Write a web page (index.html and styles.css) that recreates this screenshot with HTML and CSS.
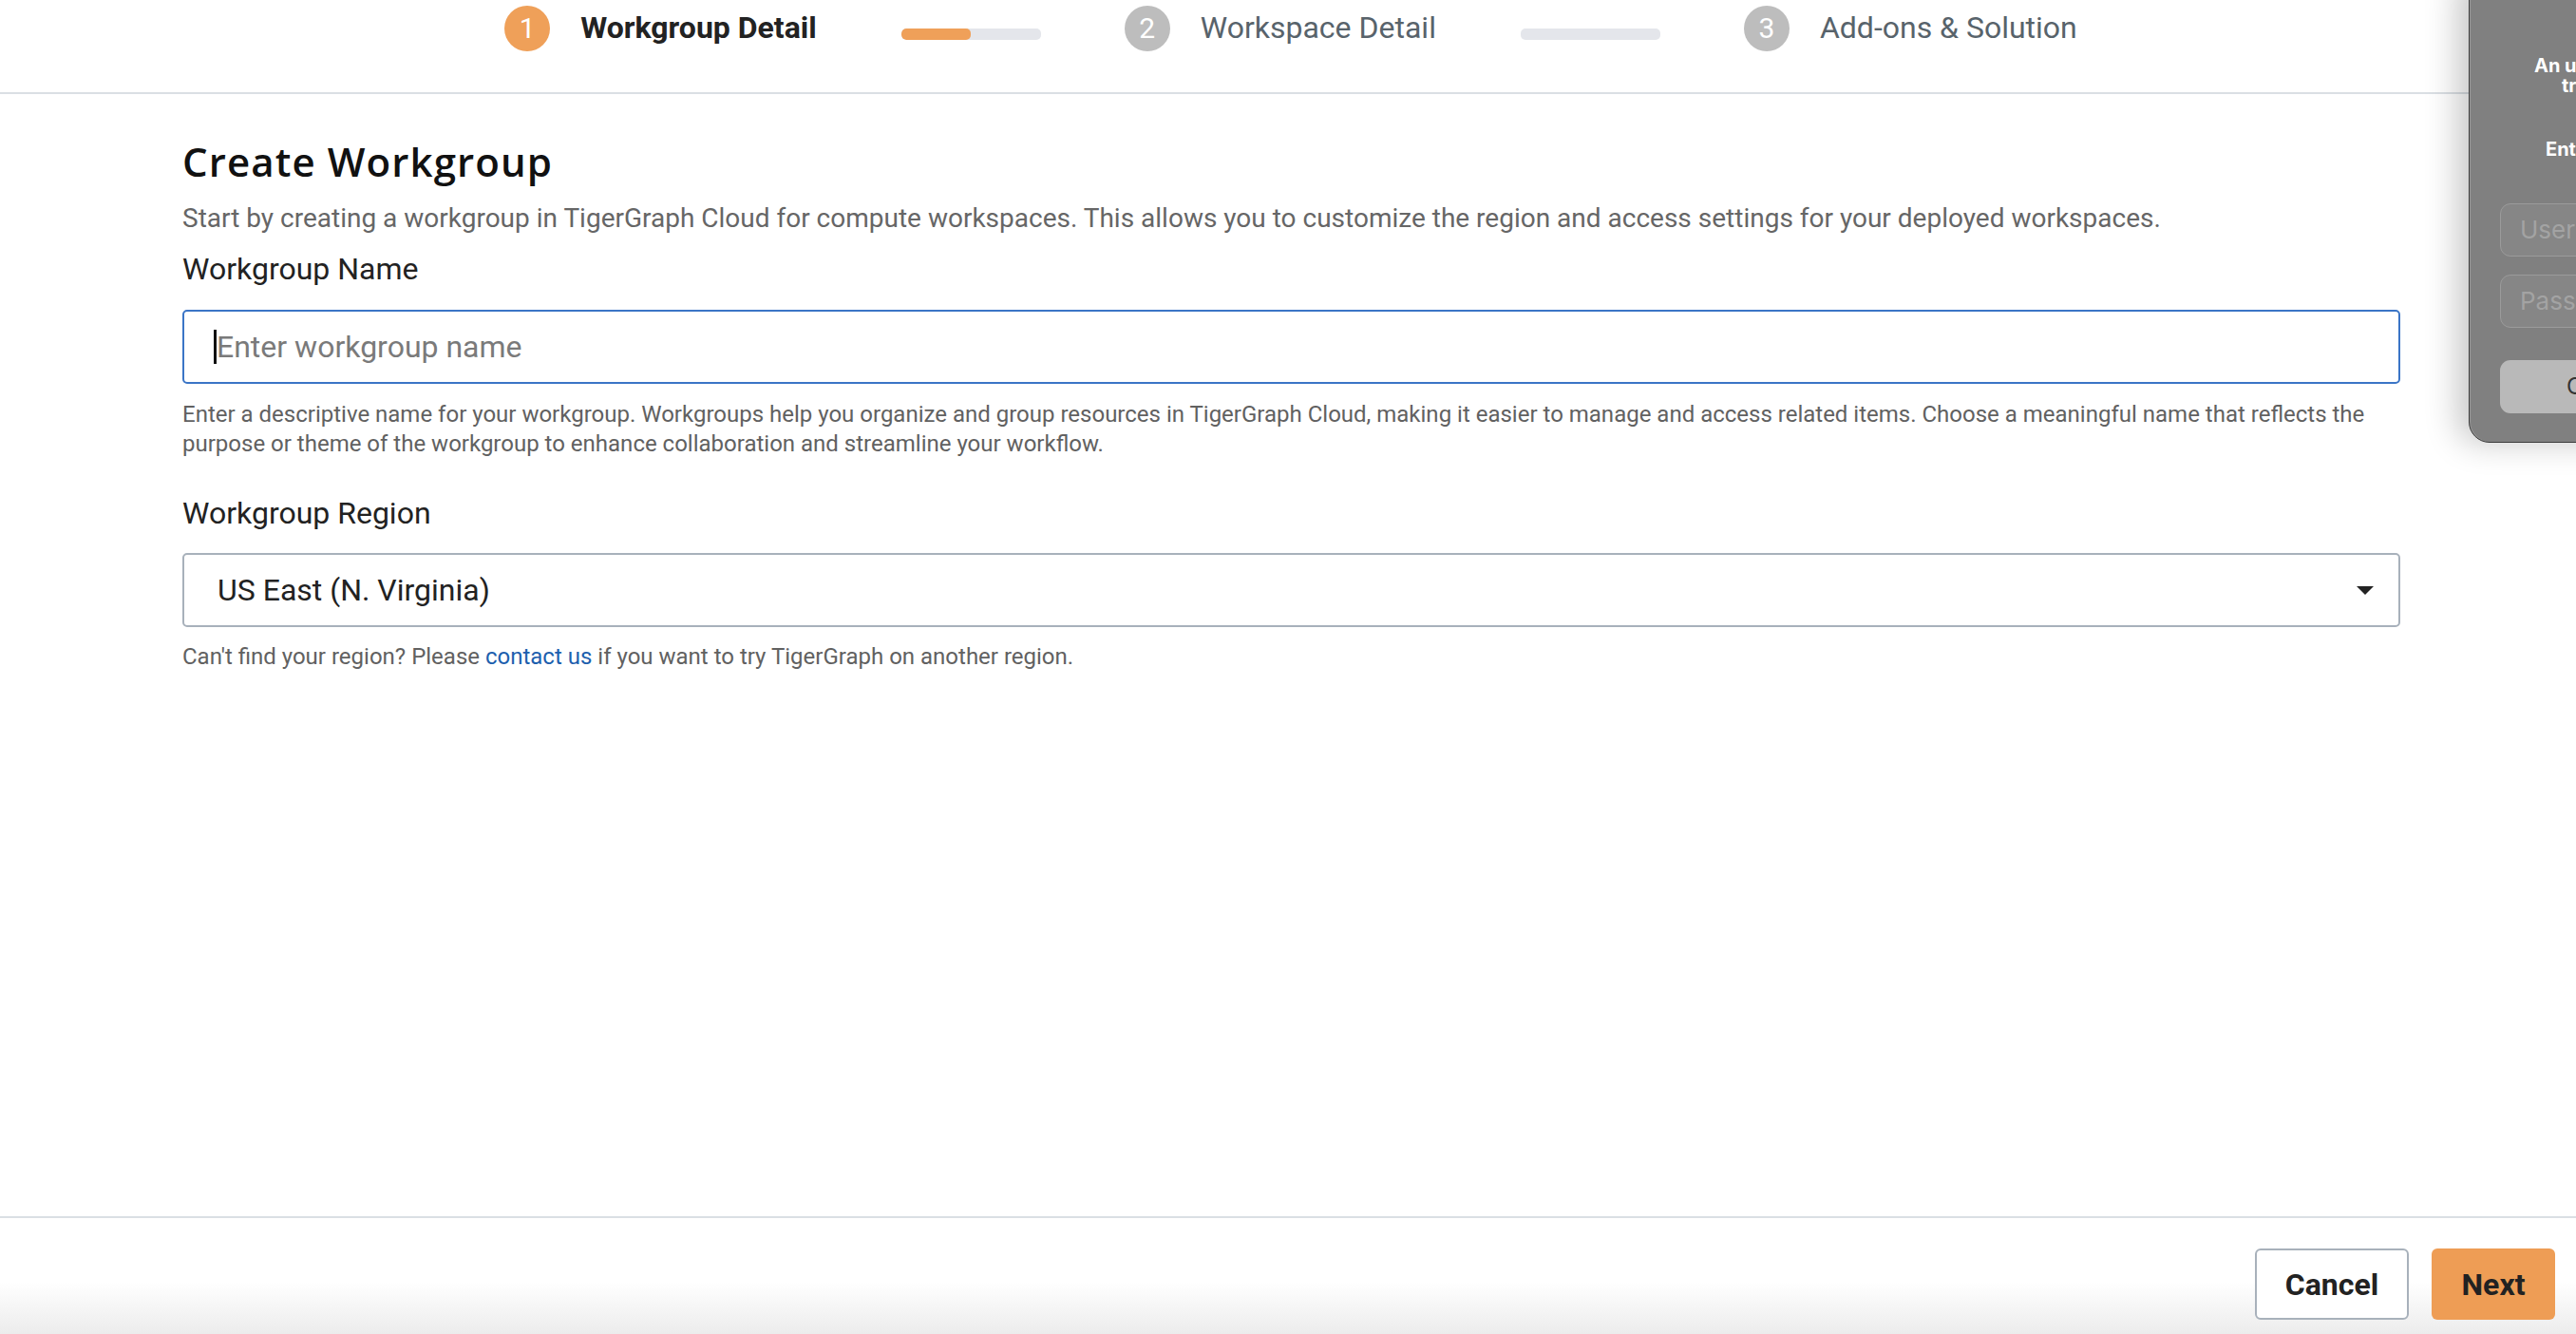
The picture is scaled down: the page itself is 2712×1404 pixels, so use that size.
FILE: index.html
```html
<!DOCTYPE html>
<html lang="en">
<head>
<meta charset="utf-8">
<title>Create Workgroup</title>
<link rel="stylesheet" href="styles.css">
</head>
<body>
<div class="page">
  <header class="stepper">
    <div class="step">
      <div class="dot active">1</div>
      <div class="step-label current">Workgroup Detail</div>
    </div>
    <div class="bar"><div class="bar-fill"></div></div>
    <div class="step">
      <div class="dot">2</div>
      <div class="step-label">Workspace Detail</div>
    </div>
    <div class="bar"></div>
    <div class="step">
      <div class="dot">3</div>
      <div class="step-label">Add-ons &amp; Solution</div>
    </div>
  </header>

  <main class="content">
    <h1 class="title">Create Workgroup</h1>
    <p class="subtitle">Start by creating a workgroup in TigerGraph Cloud for compute workspaces. This allows you to customize the region and access settings for your deployed workspaces.</p>

    <div class="field-label">Workgroup Name</div>
    <div class="input focused"><span class="caret"></span><span class="placeholder">Enter workgroup name</span></div>
    <p class="helper">Enter a descriptive name for your workgroup. Workgroups help you organize and group resources in TigerGraph Cloud, making it easier to manage and access related items. Choose a meaningful name that reflects the purpose or theme of the workgroup to enhance collaboration and streamline your workflow.</p>

    <div class="field-label region-label">Workgroup Region</div>
    <div class="input select">
      <span class="value">US East (N. Virginia)</span>
      <svg class="arrow" width="18" height="9" viewBox="0 0 18 9"><path d="M0 0 L18 0 L9 9 Z" fill="#222"/></svg>
    </div>
    <p class="helper region-help">Can't find your region? Please <a class="link" href="#">contact us</a> if you want to try TigerGraph on another region.</p>
  </main>

  <footer class="actions">
    <button class="btn btn-cancel">Cancel</button>
    <button class="btn btn-next">Next</button>
  </footer>
</div>

<div class="auth-dialog">
  <div class="auth-line l1">An unknown application is trying to</div>
  <div class="auth-line l2">trigger a privileged operation.</div>
  <div class="auth-line l3">Enter your password to allow this.</div>
  <div class="auth-input first">Username</div>
  <div class="auth-input">Password</div>
  <div class="auth-btn">Cancel</div>
</div>
</body>
</html>
```
FILE: styles.css
```css
* { box-sizing: border-box; }
html, body {
  margin: 0;
  padding: 0;
  width: 2712px;
  height: 1404px;
  overflow: hidden;
  background: #fff;
  font-family: Roboto, "Liberation Sans", sans-serif;
  color: #222;
}
.page {
  display: flex;
  flex-direction: column;
  height: 1404px;
}

/* Stepper */
.stepper {
  height: 99px;
  border-bottom: 2px solid #dadfe4;
  display: flex;
  justify-content: center;
  align-items: flex-start;
  padding-top: 6px;
  padding-left: 6px;
}
.step {
  display: flex;
  align-items: flex-start;
  gap: 32px;
}
.dot {
  width: 48px;
  height: 48px;
  border-radius: 50%;
  background: #bdbdbd;
  color: #fff;
  font-size: 30px;
  line-height: 48px;
  text-align: center;
}
.dot.active { background: #efa059; }
.step-label {
  font-size: 32px;
  line-height: 46px;
  color: #58636b;
  white-space: nowrap;
}
.step-label.current {
  font-weight: 700;
  color: #222;
}
.bar {
  width: 147px;
  height: 12px;
  margin: 24px 88px 0 89px;
  border-radius: 5px;
  background: #e4e6eb;
  overflow: hidden;
}
.bar-fill {
  width: 50%;
  height: 100%;
  background: #efa059;
  border-radius: 5px;
}

/* Content */
.content {
  flex: 1;
  padding: 44px 185px 0 192px;
}
.title {
  margin: 0;
  font-family: "Open Sans", Lato, sans-serif;
  font-weight: 600;
  font-size: 42px;
  line-height: 54px;
  color: #111;
  letter-spacing: 1.1px;
}
.subtitle {
  margin: 15px 0 0;
  font-size: 28px;
  line-height: 36px;
  color: #666;
}
.field-label {
  margin-top: 15px;
  font-size: 32px;
  line-height: 40px;
  color: #222;
}
.region-label { margin-top: 37px; }
.input {
  margin-top: 23px;
  height: 78px;
  border: 2px solid #a8b1bb;
  border-radius: 5px;
  display: flex;
  align-items: center;
  padding: 0 26px 0 33px;
  font-size: 32px;
}
.input.focused {
  border-color: #3b75c6;
  padding-left: 31px;
}
.caret {
  width: 3px;
  height: 36px;
  background: #111;
}
.placeholder { color: #7a7a7a; }
.select {
  margin-top: 22px;
  justify-content: space-between;
  padding-left: 35px;
}
.value { color: #222; }
.arrow { display: block; }
.helper {
  margin: 17px 0 0;
  font-size: 24px;
  line-height: 31px;
  color: #616161;
}
.region-help { margin-top: 16px; }
.link {
  color: #1d5fae;
  text-decoration: none;
}

/* Footer */
.actions {
  height: 124px;
  border-top: 2px solid #dadfe4;
  display: flex;
  justify-content: flex-end;
  align-items: flex-start;
  gap: 24px;
  padding: 32px 22px 0 0;
  background: linear-gradient(to bottom, #fff 0%, #fff 55%, #ececec 100%);
}
.btn {
  height: 75px;
  border-radius: 6px;
  font-family: Roboto, "Liberation Sans", sans-serif;
  font-size: 32px;
  font-weight: 700;
  color: #222;
  cursor: pointer;
}
.btn-cancel {
  width: 162px;
  background: #fff;
  border: 2px solid #a8b1bb;
}
.btn-next {
  width: 130px;
  background: #ee9d55;
  border: none;
}

/* macOS auth dialog overlay */
.auth-dialog {
  position: absolute;
  top: -30px;
  left: 2599px;
  width: 560px;
  height: 496px;
  background: #808080;
  border: 1px solid #3c3c3c;
  border-radius: 22px;
  box-shadow: -12px 0 34px rgba(0, 0, 0, 0.22), inset 1px 0 0 #9a9a9a;
  padding-top: 88px;
  font-family: Inter, "Liberation Sans", sans-serif;
  color: #fff;
}
.auth-line {
  font-size: 20px;
  font-weight: 700;
  line-height: 21px;
  white-space: nowrap;
}
.l1 { padding-left: 68px; }
.l2 { padding-left: 97px; }
.l3 { padding-left: 80px; margin-top: 46px; }
.auth-input {
  margin: 46px 0 0 32px;
  width: 480px;
  height: 56px;
  border: 1px solid #9b9b9b;
  border-radius: 11px;
  background: #868686;
  color: #a3a3a3;
  font-size: 26px;
  line-height: 54px;
  padding-left: 20px;
}
.auth-input + .auth-input { margin-top: 19px; }
.auth-btn {
  margin: 34px 0 0 32px;
  width: 480px;
  height: 56px;
  border-radius: 11px;
  background: #b9b9b9;
  color: #333;
  font-size: 24px;
  line-height: 56px;
  padding-left: 70px;
}
```
